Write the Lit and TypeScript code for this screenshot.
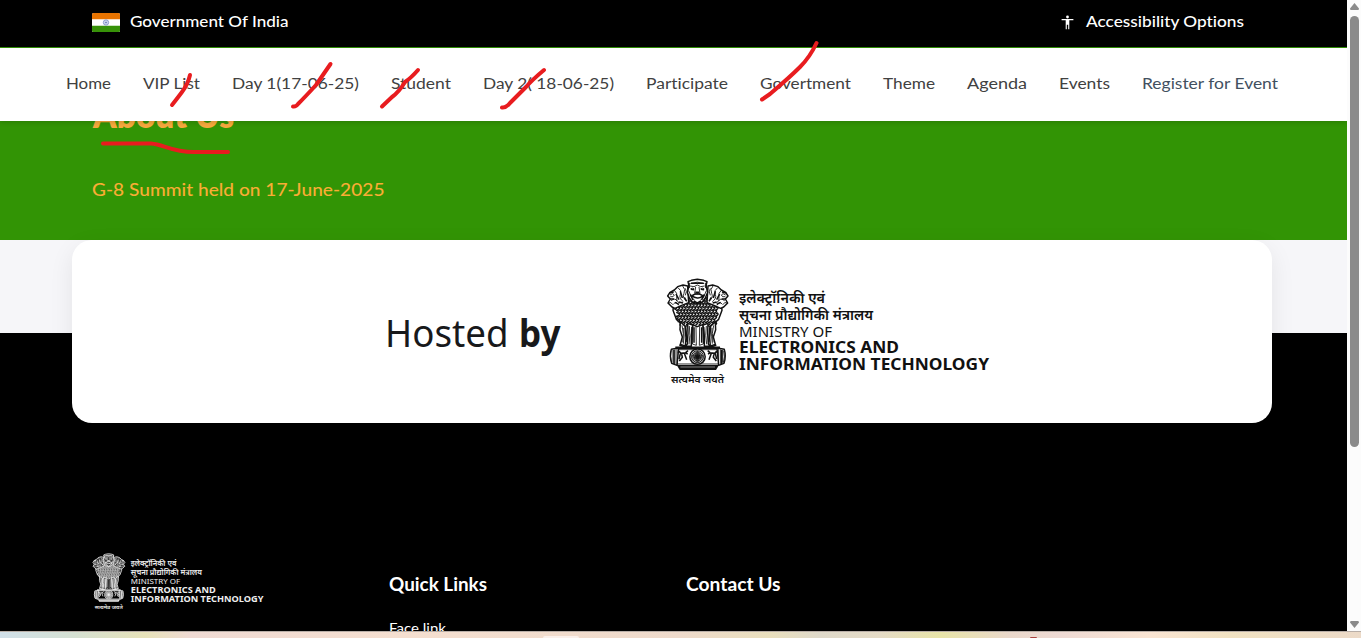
import { LitElement, html, svg, css } from "lit";
import { customElement, property } from "lit/decorators.js";

/** One line of text set to an exact measure, so labels keep their width in any font. */
@customElement("text-line")
class TextLine extends LitElement {
  @property() text = "";
  @property({ type: Number }) measure = 50;
  @property({ type: Number }) size = 16;
  static styles = css`
    :host { display: block; }
    svg { display: block; overflow: visible; }
    text { fill: currentColor; white-space: pre; font-variant-ligatures: none; }
  `;
  render() {
    const h = Math.round(this.size * 1.5);
    return html`<svg width=${this.measure} height=${h}>
      <text x="0" y=${this.size * 1.1} font-size=${this.size} textLength=${this.measure} lengthAdjust="spacingAndGlyphs">${this.text}</text>
    </svg>`;
  }
}

const curls = () => {
  const out = [];
  for (let row = 0; row < 9; row++) {
    for (let col = 0; col < 15; col++) {
      const x = 58 + col * 9.6 + (row % 2) * 4.5;
      const y = 86 + row * 9.2;
      const edge = Math.abs(x - 127);
      if (edge > 74 - row * 2.2) continue;
      out.push(svg`<path d="M${x - 4} ${y}q3 -6 6 0q-2 6 -6 4" />`);
    }
  }
  return out;
};

const sideLion = svg`
  <path class="solid" d="M98 48L84 45L68 50L58 60L45 67L38 78L46 87L39 99L51 111L60 115L80 106L101 98Z"/>
  <path class="line" d="M45 75q9 -8 13 0q-2 8 -12 5M48 92q14 -10 18 2M40 99q9 -5 13 5M58 61q10 8 7 19t8 20M69 53q12 8 7 20t9 22M83 48q10 10 4 22t7 23M55 103q9 -12 16 3M91 55q6 10 0 21"/>
  <path class="bold" d="M43 69l13 -3M46 87l11 0M63 72l9 17M76 64l6 20M60 97l12 6M88 82l7 12M72 96l12 3"/>
  <path class="solid" d="M76 155L75 179L82 201L76 223L91 228L93 203L90 169Z"/>
  <path class="solid" d="M98 160L99 190L97 222L91 229L109 229L109 199L113 165Z"/>
  <path class="line" d="M81 166q7 23 2 51M86 174q3 26 -1 47M103 168q4 28 -1 55M114 165L112 222L124 226L123 169"/>
  <path class="bold" d="M92 169L96 216M111 171L110 221M73 225L87 230L104 230M117 172V218"/>
  <path class="solid" d="M49 238Q43 259 50 280L66 286L71 234Z"/>
  <path class="line" d="M54 240v38M60 238v44M66 236v48"/>
  <path class="bold" d="M57 240v42M72 244l6 6l14 -2l7 -6M76 251l-4 16M88 250l7 19M80 252l2 10l-9 11M73 243l-4 5M90 248l8 4"/>
`;

const emblem = svg`
  <g transform="translate(-11 -8) scale(.33333)">
    <path class="solid" d="M57 94L54 121L64 148L78 160L90 169L110 163L127 170L145 163L165 169L177 160L191 148L201 121L198 94L160 73L95 73Z"/>
    <g class="line curls">${curls()}</g>
    ${sideLion}
    <g transform="translate(257 0) scale(-1 1)">${sideLion}</g>
    <path class="solid" d="M99 35L109 31L127 28L146 31L156 35L153 48L158 67L151 84L142 96L127 101L112 96L103 84L97 67L102 48Z"/>
    <path class="line" d="M106 41q21 -9 42 0M105 48l12 2l10 -5l10 5l12 -2M106 57q8 -5 12 0M136 57q8 -5 12 0M122 51l-3 19q8 7 16 0l-3 -19M101 62l8 19l10 10M154 62l-8 19l-10 10"/>
    <path class="bold" d="M108 40H146M108 58l9 1M138 58l9 1M121 67l12 0M111 77q16 -12 32 0q-6 8 -16 7t-16 -7M106 73l8 17M148 73l-8 17M102 38l0 16M153 38l0 16M116 93l11 6l11 -6"/>
    <path class="bold" d="M61 232H195M62 235L193 235"/>
    <path class="line" d="M69 239H187M66 282H190M48 242Q44 261 50 278M206 242Q211 261 205 278"/>
    <circle class="bold ring" cx="127.5" cy="260" r="23"/>
    <circle class="line ring" cx="127.5" cy="260" r="18"/>
    ${Array.from({ length: 24 }, (_, i) => svg`<path class="line" d="M127.5 257V242" transform=${`rotate(${i * 15} 127.5 260)`}/>`)}
    <circle cx="127.5" cy="260" r="5" fill="currentColor"/>
    <path d="M65 285H192L183 300H74Z" fill="currentColor"/>
    <path class="gap" d="M76 291H180"/>
  </g>
`;

@customElement("ministry-logo")
class MinistryLogo extends LitElement {
  static styles = css`
    :host { display: block; }
    svg { display: block; width: 100%; overflow: visible; }
    text { fill: currentColor; font-family: "Noto Sans", "Noto Sans Devanagari", sans-serif; }
    .solid { fill: var(--paper); stroke: currentColor; stroke-width: 4.4; stroke-linejoin: round; }
    .line { fill: none; stroke: currentColor; stroke-width: 2.6; }
    .curls { stroke-width: 4.2; }
    .bold { fill: none; stroke: currentColor; stroke-width: 4.6; }
    .ring { fill: var(--paper); }
    .gap { stroke: var(--paper); stroke-width: 1.5; }
    .hi { font-weight: 600; }
    .b { font-weight: 700; }
  `;
  render() {
    return html`<svg viewBox="0 0 324 108">
      ${emblem}
      <text class="hi" x="5" y="105" font-size="10" textLength="53" lengthAdjust="spacingAndGlyphs">सत्यमेव जयते</text>
      <text class="hi" x="73" y="25" font-size="14" textLength="86" lengthAdjust="spacingAndGlyphs">इलेक्ट्रॉनिकी एवं</text>
      <text class="hi" x="73" y="42" font-size="14" textLength="134" lengthAdjust="spacingAndGlyphs">सूचना प्रौद्योगिकी मंत्रालय</text>
      <text x="73" y="58.5" font-size="15" textLength="93" lengthAdjust="spacingAndGlyphs">MINISTRY OF</text>
      <text class="b" x="73" y="75" font-size="16" textLength="160" lengthAdjust="spacingAndGlyphs">ELECTRONICS AND</text>
      <text class="b" x="73" y="92" font-size="16" textLength="250" lengthAdjust="spacingAndGlyphs">INFORMATION TECHNOLOGY</text>
    </svg>`;
  }
}

const NAV: [string, number][] = [
  ["Home", 45], ["VIP List", 57], ["Day 1(17-06-25)", 127], ["Student", 60],
  ["Day 2( 18-06-25)", 131], ["Participate", 82], ["Govertment", 91],
  ["Theme", 52], ["Agenda", 60], ["Events", 51], ["Register for Event", 136],
];

@customElement("app-root")
class AppRoot extends LitElement {
  static styles = css`
    :host { display: block; position: relative; width: 1361px; height: 638px; overflow: hidden; font-family: Lato, "Noto Sans", sans-serif; }
    * { box-sizing: border-box; }
    .window { display: grid; grid-template-columns: 1347px 14px; height: 631px; overflow: hidden; }
    .page { height: 631px; overflow: hidden; background: #000; }
    .top { display: flex; justify-content: space-between; height: 47px; padding: 9px 103px 0 92px; background: #000; color: #fff; font-weight: 500; }
    .top > div { display: flex; }
    .flag { display: block; margin: 4px 9.5px 0 0; }
    .man { display: block; margin: 6px 12.5px 0 0; }
    .hero { height: 193px; padding-top: 1px; background: #329405; color: #f9ad35; }
    nav { display: flex; justify-content: space-between; position: relative; z-index: 1; height: 73px; padding: 24px 69px 0 66px; background: #fff; color: #414141; box-shadow: 0 1px 5px rgba(0, 0, 0, .18); }
    nav .register { color: #42505f; }
    .hero h1 { margin: -33px 0 0 93px; font-size: inherit; font-weight: 800; color: #f6a93e; }
    .hero p { margin: 35px 0 0 91.5px; font-weight: 500; }
    .band { height: 93px; padding: 0 75px 0 72px; background: #f6f6f9; }
    .card { display: flex; position: relative; z-index: 1; height: 183px; border-radius: 20px; background: #fff; box-shadow: 0 8px 24px rgba(0, 0, 0, .08); color: #18191b; --paper: #fff; }
    .hosted { display: flex; gap: 11px; margin: 65px 0 0 312.5px; font-family: "Noto Sans", "Open Sans", sans-serif; }
    .hosted .by { font-weight: 700; }
    .card ministry-logo { width: 324px; margin: 38px 0 0 105.5px; color: #111; }
    footer { display: grid; grid-template-columns: 297px 297px 1fr; padding: 220px 0 0 92px; background: #000; color: #fff; }
    footer ministry-logo { width: 172px; margin-left: -.5px; color: #eee; --paper: #3a3a3a; }
    h2 { margin: 17.5px 0 0; font-size: inherit; font-weight: 700; }
    footer a { display: block; margin-top: 20px; }
    .scroll { display: flex; flex-direction: column; align-items: center; height: 631px; background: #fcfcfc; }
    .scroll svg { display: block; }
    .thumb { width: 9px; height: 431px; margin: 6px 0 auto; border-radius: 5px; background: #8b8b8b; }
    .up { margin-top: 3px; }
    .down { margin-bottom: 3px; }
    .taskbar { display: flex; height: 7px; border-top: 1px solid #b9afa8; background: linear-gradient(90deg, #d1e0e9 0, #d5e0d2 75px, #e7e2b9 145px, #efdad3 190px, #f5dfd0 400px, #eedacb 680px, #e9dfbd 770px, #dfd9ca 820px, #e5dbc6 880px, #e8e4a8 940px, #ead8cb 1010px, #eedad4 1060px, #fae5d3 1150px, #f1e2c2 1230px, #ecdac8 1361px); }
    .tab { width: 36px; height: 2px; margin: 4px 0 0 543px; border-radius: 3px 3px 0 0; background: #fbf1ec; }
    .app { width: 7px; height: 1px; margin: 5px 0 0 451px; border-radius: 4px 4px 0 0; background: #a9403d; }
    .marks { position: absolute; inset: 0; z-index: 2; fill: none; stroke: #e81c1f; stroke-width: 4; stroke-linecap: round; stroke-linejoin: round; pointer-events: none; }
  `;
  render() {
    return html`
      <div class="window">
        <div class="page">
          <div class="top">
            <div>
              <svg class="flag" width="28" height="19" viewBox="0 0 28 19">
                <rect width="28" height="19" rx="1.5" fill="#fff"/>
                <path d="M0 6.3V1.5Q0 0 1.5 0h25Q28 0 28 1.5V6.3z" fill="#e77300"/>
                <path d="M0 12.7V17.5Q0 19 1.5 19h25Q28 19 28 17.5V12.7z" fill="#379208"/>
                <circle cx="14" cy="9.5" r="2.7" fill="#cbd4ea" stroke="#7c91c5" stroke-width=".8"/>
                <circle cx="14" cy="9.5" r=".8" fill="#5870ad"/>
              </svg>
              <text-line text="Government Of India" measure="158.5" size="16"></text-line>
            </div>
            <div>
              <svg class="man" width="13" height="15" viewBox="0 0 13 15"><circle cx="6.5" cy="2" r="1.4" fill="#fff"/><path d="M.6 4.1H12.4V5.3H8.3V14.2H7.2V9.7H5.8V14.2H4.7V5.3H.6z" fill="#fff"/></svg>
              <text-line text="Accessibility Options" measure="158" size="16"></text-line>
            </div>
          </div>
          <div class="hero">
            <nav>${NAV.map(([t, w]) => html`<text-line class=${t.startsWith("Reg") ? "register" : ""} text=${t} measure=${w} size="15.5"></text-line>`)}</nav>
            <h1><text-line text="About Us" measure="141" size="36"></text-line></h1>
            <p><text-line text="G-8 Summit held on 17-June-2025" measure="292.5" size="17.5"></text-line></p>
          </div>
          <div class="band">
            <div class="card">
              <div class="hosted">
                <text-line text="Hosted" measure="123.5" size="38"></text-line>
                <text-line class="by" text="by" measure="41.5" size="38"></text-line>
              </div>
              <ministry-logo></ministry-logo>
            </div>
          </div>
          <footer>
            <ministry-logo></ministry-logo>
            <div>
              <h2><text-line text="Quick Links" measure="98" size="18"></text-line></h2>
              <a><text-line text="Face link" measure="57" size="14"></text-line></a>
            </div>
            <div><h2><text-line text="Contact Us" measure="94.5" size="18"></text-line></h2></div>
          </footer>
        </div>
        <div class="scroll">
          <svg class="up" width="9" height="7"><path d="M4.5 0L9 5.5Q9 7 8 7H1Q0 7 0 5.5z" fill="#8b8b8b"/></svg>
          <div class="thumb"></div>
          <svg class="down" width="9" height="7"><path d="M4.5 7L9 1.5Q9 0 8 0H1Q0 0 0 1.5z" fill="#8b8b8b"/></svg>
        </div>
      </div>
      <div class="taskbar"><div class="tab"></div><div class="app"></div></div>
      <svg class="marks" width="1361" height="638">
        <path d="M190 75Q188 84 182 92T172 105"/>
        <path d="M330.5 64L316 85Q306 96 298 104Q296 107 293 106.5"/>
        <path d="M418 70Q411 78 405 82Q399 92 392 97L382 106.5"/>
        <path d="M544 70Q532 80 526 87L510 103Q506 108 502 107.5"/>
        <path d="M816.5 43Q810 57 800 67T770 94L762 99.5"/>
        <path d="M103 143.5H151C164 144.5 171 152 194 152H228"/>
      </svg>
    `;
  }
}
